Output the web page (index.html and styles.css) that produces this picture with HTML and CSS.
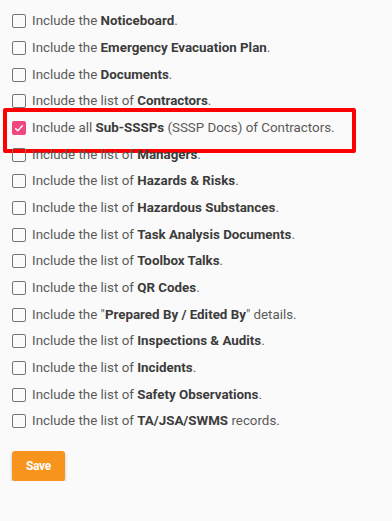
FILE: index.html
```html
<!DOCTYPE html>
<html>
<head>
<meta charset="utf-8">
<link rel="stylesheet" href="styles.css">
</head>
<body>
<div class="page">
  <ul class="options">
    <li class="opt"><span class="box"></span><span class="label">Include the <b>Noticeboard</b>.</span></li>
    <li class="opt"><span class="box"></span><span class="label">Include the <b>Emergency Evacuation Plan</b>.</span></li>
    <li class="opt"><span class="box"></span><span class="label">Include the <b>Documents</b>.</span></li>
    <li class="opt"><span class="box"></span><span class="label">Include the list of <b>Contractors</b>.</span></li>
    <li class="opt highlighted"><span class="box checked"><svg viewBox="0 0 14 14" width="14" height="14"><path d="M3.2 7.2 L5.8 9.8 L10.8 4.2" fill="none" stroke="#fff" stroke-width="1.4"/></svg></span><span class="label">Include all <b>Sub-SSSPs</b> (SSSP Docs) of Contractors.</span><span class="mark"></span></li>
    <li class="opt"><span class="box"></span><span class="label">Include the list of <b>Managers</b>.</span></li>
    <li class="opt"><span class="box"></span><span class="label">Include the list of <b>Hazards &amp; Risks</b>.</span></li>
    <li class="opt"><span class="box"></span><span class="label">Include the list of <b>Hazardous Substances</b>.</span></li>
    <li class="opt"><span class="box"></span><span class="label">Include the list of <b>Task Analysis Documents</b>.</span></li>
    <li class="opt"><span class="box"></span><span class="label">Include the list of <b>Toolbox Talks</b>.</span></li>
    <li class="opt"><span class="box"></span><span class="label">Include the list of <b>QR Codes</b>.</span></li>
    <li class="opt"><span class="box"></span><span class="label">Include the "<b>Prepared By / Edited By</b>" details.</span></li>
    <li class="opt"><span class="box"></span><span class="label">Include the list of <b>Inspections &amp; Audits</b>.</span></li>
    <li class="opt"><span class="box"></span><span class="label">Include the list of <b>Incidents</b>.</span></li>
    <li class="opt"><span class="box"></span><span class="label">Include the list of <b>Safety Observations</b>.</span></li>
    <li class="opt"><span class="box"></span><span class="label">Include the list of <b>TA/JSA/SWMS</b> records.</span></li>
  </ul>
  <button class="save">Save</button>
</div>
</body>
</html>
```
FILE: styles.css
```css
html, body {
  margin: 0;
  padding: 0;
  background: #fafafa;
}
body {
  font-family: Roboto, "Noto Sans", sans-serif;
  font-size: 13.35px;
  color: #5a5a5a;
}
.page {
  padding: 8px 12px 0 12px;
}
.options {
  list-style: none;
  margin: 0;
  padding: 0;
}
.opt {
  position: relative;
  display: flex;
  align-items: center;
  height: 26.67px;
  white-space: nowrap;
}
.opt b {
  font-weight: 700;
  color: #3c3c3c;
}
.box {
  box-sizing: border-box;
  width: 14px;
  height: 14px;
  border: 1.5px solid #757575;
  border-radius: 2px;
  margin-right: 6px;
  flex: none;
  display: flex;
  align-items: center;
  justify-content: center;
}
.box.checked {
  border: none;
  background: #f0477f;
}
.box svg {
  display: block;
}
.label {
  line-height: 16px;
}
.mark {
  position: absolute;
  box-sizing: border-box;
  left: -9px;
  top: -7px;
  width: 353px;
  height: 45px;
  border: 4px solid #ff0000;
  border-radius: 2px;
}
.save {
  margin-top: 16px;
  width: 53px;
  height: 30px;
  background: #f7941d;
  color: #fff;
  border: none;
  border-radius: 3px;
  font-family: Roboto, sans-serif;
  font-weight: 700;
  font-size: 12px;
  letter-spacing: -0.3px;
  box-shadow: 0 2px 3px rgba(0,0,0,0.25);
  padding: 0;
}
```
